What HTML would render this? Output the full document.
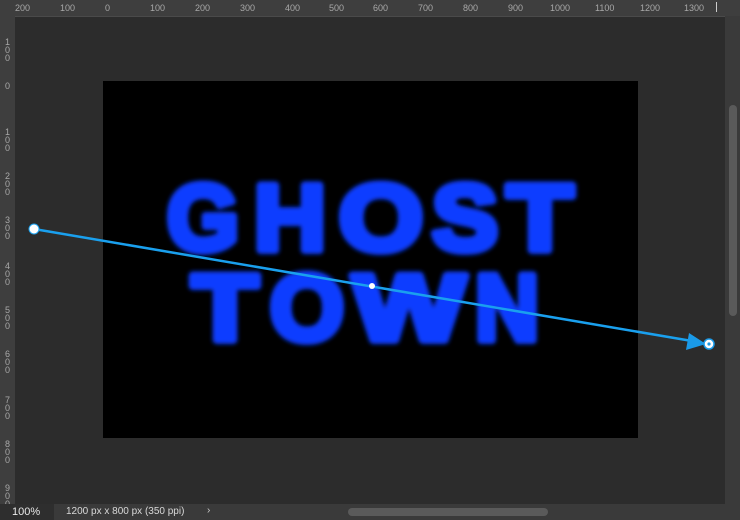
<!DOCTYPE html>
<html><head><style>
html,body{margin:0;padding:0;width:740px;height:520px;overflow:hidden;background:#2c2c2c;font-family:"Liberation Sans",sans-serif}
.t{position:absolute;font-size:9px;color:#a8a8a8}
</style></head><body>
<div style="position:absolute;left:0;top:0;width:740px;height:16px;background:#3e3e3e;border-bottom:1px solid #4a4a4a"></div>
<div style="position:absolute;left:0;top:16px;width:15px;height:488px;background:#3e3e3e"></div>
<div class="t" style="left:15px;top:3px">200</div><div class="t" style="left:60px;top:3px">100</div>
<div class="t" style="left:105px;top:3px">0</div><div class="t" style="left:150px;top:3px">100</div>
<div class="t" style="left:195px;top:3px">200</div><div class="t" style="left:240px;top:3px">300</div>
<div class="t" style="left:285px;top:3px">400</div><div class="t" style="left:329px;top:3px">500</div>
<div class="t" style="left:373px;top:3px">600</div><div class="t" style="left:418px;top:3px">700</div>
<div class="t" style="left:463px;top:3px">800</div><div class="t" style="left:508px;top:3px">900</div>
<div class="t" style="left:550px;top:3px">1000</div><div class="t" style="left:595px;top:3px">1100</div>
<div class="t" style="left:640px;top:3px">1200</div><div class="t" style="left:684px;top:3px">1300</div>
<div style="position:absolute;left:716px;top:2px;width:1px;height:10px;background:#ccc"></div>
<div class="t" style="left:5px;top:38px;line-height:8px;width:6px">1<br>0<br>0</div>
<div class="t" style="left:5px;top:82px;line-height:8px">0</div>
<div class="t" style="left:5px;top:128px;line-height:8px;width:6px">1<br>0<br>0</div>
<div class="t" style="left:5px;top:172px;line-height:8px;width:6px">2<br>0<br>0</div>
<div class="t" style="left:5px;top:216px;line-height:8px;width:6px">3<br>0<br>0</div>
<div class="t" style="left:5px;top:262px;line-height:8px;width:6px">4<br>0<br>0</div>
<div class="t" style="left:5px;top:306px;line-height:8px;width:6px">5<br>0<br>0</div>
<div class="t" style="left:5px;top:350px;line-height:8px;width:6px">6<br>0<br>0</div>
<div class="t" style="left:5px;top:396px;line-height:8px;width:6px">7<br>0<br>0</div>
<div class="t" style="left:5px;top:440px;line-height:8px;width:6px">8<br>0<br>0</div>
<div class="t" style="left:5px;top:484px;line-height:8px;width:6px">9<br>0<br>0</div>
<div style="position:absolute;left:725px;top:16px;width:15px;height:488px;background:#3a3a3a"></div>
<div style="position:absolute;left:729px;top:105px;width:8px;height:211px;background:#5a5a5a;border-radius:4px"></div>
<div style="position:absolute;left:0;top:504px;width:740px;height:16px;background:#3a3a3a"></div>
<div style="position:absolute;left:0;top:504px;width:54px;height:16px;background:#2e2e2e"></div>
<div style="position:absolute;left:12px;top:506px;font-size:11px;color:#e8e8e8">100%</div>
<div style="position:absolute;left:66px;top:506px;font-size:10px;color:#d8d8d8">1200 px x 800 px (350 ppi)</div>
<div style="position:absolute;left:207px;top:505px;font-size:10px;color:#ccc">›</div>
<div style="position:absolute;left:348px;top:508px;width:200px;height:8px;background:#5a5a5a;border-radius:4px"></div>
<div style="position:absolute;left:103px;top:81px;width:535px;height:357px;background:#000"></div>
<svg width="740" height="520" style="position:absolute;left:0;top:0">
<defs><filter id="f" x="-10%" y="-10%" width="120%" height="120%">
<feGaussianBlur stdDeviation="2"/>
</filter></defs>
<g fill="#0a3cff" stroke="#0a3cff" stroke-width="8" stroke-linejoin="round" filter="url(#f)" font-family="Liberation Sans" font-weight="bold" font-size="94">
<text x="167" y="250" textLength="72" lengthAdjust="spacingAndGlyphs">G</text>
<text x="254" y="250" textLength="72" lengthAdjust="spacingAndGlyphs">H</text>
<text x="339" y="250" textLength="84" lengthAdjust="spacingAndGlyphs">O</text>
<text x="432" y="250" textLength="66" lengthAdjust="spacingAndGlyphs">S</text>
<text x="507" y="250" textLength="66" lengthAdjust="spacingAndGlyphs">T</text>
<text x="192" y="340" textLength="66" lengthAdjust="spacingAndGlyphs">T</text>
<text x="270" y="340" textLength="74" lengthAdjust="spacingAndGlyphs">O</text>
<text x="353" y="340" textLength="112" lengthAdjust="spacingAndGlyphs">W</text>
<text x="475" y="340" textLength="64" lengthAdjust="spacingAndGlyphs">N</text>
</g>
<line x1="34" y1="229" x2="692" y2="341" stroke="#1aa0ee" stroke-width="2.5"/>
<polygon points="706,344 689,333 686,350" fill="#1a9ae8"/>
<circle cx="34" cy="229" r="5" fill="#fff" stroke="#1aa0ee" stroke-width="1"/>
<circle cx="372" cy="286" r="3" fill="#fff"/>
<circle cx="709" cy="344" r="5" fill="#fff" stroke="#1a9ae8" stroke-width="1.5"/>
<circle cx="709" cy="344" r="1.6" fill="#1a9ae8"/>
</svg>
</body></html>
